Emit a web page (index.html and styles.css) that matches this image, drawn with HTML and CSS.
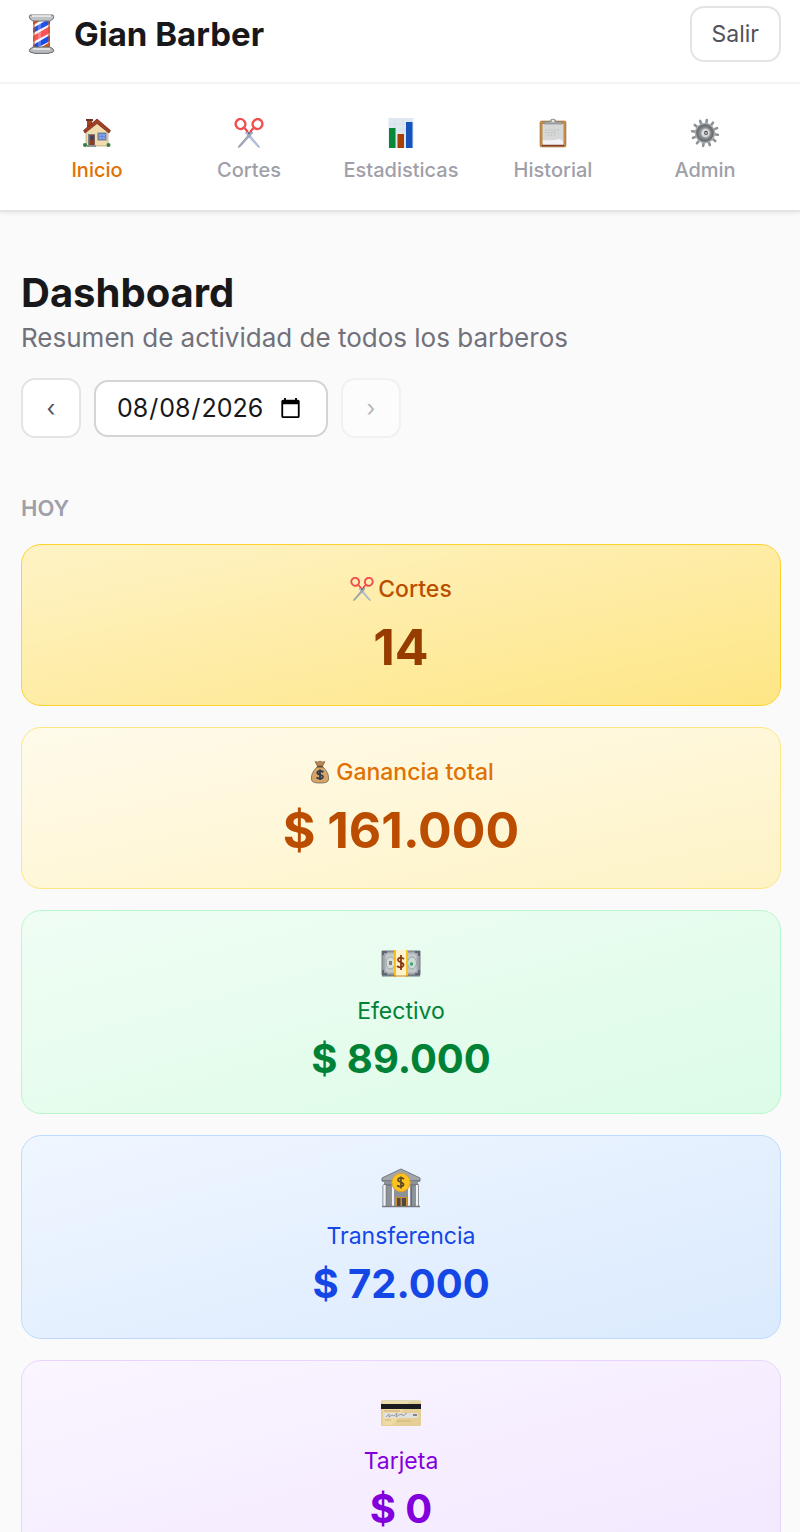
FILE: index.html
```html
<!DOCTYPE html>
<html lang="es">
<head>
	<meta charset="UTF-8">
	<meta name="viewport" content="width=device-width, initial-scale=1">
	<title>Gian Barber</title>
	<link rel="stylesheet" href="styles.css">
</head>
<body>
	<svg class="sprite" aria-hidden="true">
		<symbol id="scissors" viewBox="0 0 30 30">
			<path d="M12.6 13.2 24.6 27.6 25.6 29.4 23.6 28.6 11.4 15z" fill="#b9c6e8" stroke="#8d99b5" stroke-width=".6"/>
			<path d="M17.4 13.2 5.2 27.6 4.2 29.4 6.4 28.4 18.6 15z" fill="#a9b2c4" stroke="#70798c" stroke-width=".6"/>
			<path d="M14 14 10.5 10M16 14l3.5-4" stroke="#f04444" stroke-width="2"/>
			<ellipse cx="6.500" cy="6" rx="4.800" ry="5" fill="none" stroke="#f04d4d" stroke-width="2.4" transform="rotate(-28 6.500 6)"/>
			<ellipse cx="23.500" cy="6" rx="4.800" ry="5" fill="none" stroke="#f04d4d" stroke-width="2.4" transform="rotate(28 23.500 6)"/>
			<circle cx="15" cy="15" r="1.100" fill="#555f70"/>
		</symbol>
	</svg>

	<div class="app">
		<header class="header">
			<div class="topbar">
				<div class="brand">
					<svg class="brand-icon" viewBox="0 0 40 40" aria-hidden="true">
						<clipPath id="pole"><path d="M12 6h17v28H12z"/></clipPath>
						<path d="M12 6h17v28H12z" fill="#f5f7ff"/>
						<g clip-path="url(#pole)">
							<path d="M12 6h9L12 11z" fill="#cf4a1c"/>
							<path d="M12 14 26 6h3v4L12 19z" fill="#2250e8"/>
							<path d="M12 22 29 12v7L12 28z" fill="#fb5358"/>
							<path d="M12 31 29 21v6L16 34h-4z" fill="#1c4be5"/>
							<path d="M19 34 29 28v6z" fill="#d5501e"/>
							<path d="M12 6h2v28h-2zM27 6h2v28h-2z" fill="#cb5420" opacity=".6"/>
							<path d="M17 6h3v28h-3z" fill="#fff" opacity=".25"/>
						</g>
						<path d="M9 1h23q1.500 1.500 0 4l-3 2H12L9 5q-1.500-2 0-4z" fill="#bfc3c5" stroke="#727678"/>
						<path d="M11 2h19" stroke="#f1f2f2" stroke-width="1.500"/>
						<path d="M12 33h17l3 2q1.500 2 0 3l-5 1.400H14L9 38q-1.500-1 0-3z" fill="#b6babc" stroke="#666a6d"/>
						<path d="M12 35h17" stroke="#eee" stroke-width="1.500"/>
					</svg>
					<span class="brand-name">Gian Barber</span>
				</div>
				<button type="button" class="logout">Salir</button>
			</div>
			<nav class="tabs">
				<a href="#inicio" class="tab active">
					<svg class="tab-icon" viewBox="0 0 30 30" aria-hidden="true">
						<path d="M5 2h5v9H5z" fill="#a34522"/><path d="M4 1h7v2H4z" fill="#6f3424"/>
						<path d="M4 13 15 4l11 9v15H4z" fill="#f0dcae" stroke="#a88e60" stroke-width=".6"/>
						<path d="M15 1 1.500 12.500 3 15l12-9.500L27 15l1.500-2.500z" fill="#a63f20" stroke="#632a1c" stroke-width=".7"/>
						<path d="M6 16h7v12H6z" fill="#75848f"/><path d="M7.500 17h5v11h-5z" fill="#8a3d20"/>
						<path d="M8.500 18h3v4h-3z" fill="#364662"/>
						<path d="M15.500 14.500h9v8h-9z" fill="#70829c"/><path d="M17 16h6v5h-6z" fill="#7fa1fb"/>
						<path d="M20 16v5M17 18.500h6" stroke="#5470ba" stroke-width=".5"/>
						<path d="M5 27h9v2H5z" fill="#8c9398"/>
						<circle cx="3" cy="27" r="2" fill="#347a43"/><circle cx="26.500" cy="27" r="2" fill="#347a43"/>
					</svg>
					<span>Inicio</span>
				</a>
				<a href="#cortes" class="tab">
					<svg class="tab-icon" aria-hidden="true"><use href="#scissors"/></svg>
					<span>Cortes</span>
				</a>
				<a href="#estadisticas" class="tab">
					<svg class="tab-icon" viewBox="0 0 30 30" aria-hidden="true">
						<path d="M2.500 0h25v30h-25z" fill="#dfe8f0"/>
						<path d="M2.500 6h25M2.500 12h25M2.500 18h25M2.500 24h25M9 0v30M17 0v30" stroke="#cfdbe8" stroke-width=".6"/>
						<path d="M3 10h6.500v20H3z" fill="#078738"/>
						<path d="M11.500 16h6.500v14h-6.500z" fill="#a83f04"/>
						<path d="M20 4h6.500v26H20z" fill="#1653bd"/>
					</svg>
					<span>Estadisticas</span>
				</a>
				<a href="#historial" class="tab">
					<svg class="tab-icon" viewBox="0 0 30 30" aria-hidden="true">
						<rect x="2" y="3" width="26" height="26" rx="1.500" fill="#c48a48" stroke="#9c7040" stroke-width=".6"/>
						<path d="M4.500 6h21v21h-21z" fill="#d5d8d7"/>
						<path d="M5 22q10 1 16-1l4 2v4H5z" fill="#f3f1f8"/>
						<path d="M7 12h14M7 14.500h12M9 17h9" stroke="#b7bbba" stroke-width=".8" stroke-dasharray="2 1"/>
						<path d="M6 6V4h6q0-3 3-3t3 3h6v2z" fill="#a8adaf" stroke="#7c8285" stroke-width=".6"/>
						<circle cx="15" cy="3" r="1" fill="#fff"/>
						<path d="M4 27.500h22" stroke="#823c20" stroke-width="1.500"/>
					</svg>
					<span>Historial</span>
				</a>
				<a href="#admin" class="tab">
					<svg class="tab-icon" viewBox="0 0 30 30" aria-hidden="true">
						<g stroke="#8c9295" stroke-width="2.600" stroke-linecap="round" transform="rotate(8 15 15)">
							<path d="M15 2v26M2 15h26M8.500 3.700l13 22.600M3.700 8.500l22.600 13M3.700 21.500l22.600-13M8.500 26.300l13-22.600"/>
						</g>
						<circle cx="15" cy="15" r="10.300" fill="#a9aeb0"/>
						<circle cx="15" cy="15" r="7.800" fill="#85898c" stroke="#6c7073" stroke-width="2.200"/>
						<circle cx="15.500" cy="15" r="4.500" fill="#dcdedf" stroke="#aaa"/>
						<ellipse cx="16" cy="15" rx="1.800" ry="2.300" fill="#414548"/>
						<path d="M16 14v2.500" stroke="#e6e6e6" stroke-width="1.200"/>
					</svg>
					<span>Admin</span>
				</a>
			</nav>
		</header>

		<main class="main">
			<h1>Dashboard</h1>
			<p class="subtitle">Resumen de actividad de todos los barberos</p>
			<div class="day-picker">
				<button type="button" class="step" aria-label="Día anterior">‹</button>
				<input type="date" class="date" value="2026-08-08" aria-label="Fecha">
				<button type="button" class="step" aria-label="Día siguiente" disabled>›</button>
			</div>

			<h2>Hoy</h2>
			<section class="cards">
				<article class="card cuts">
					<p class="label"><svg class="label-icon" aria-hidden="true"><use href="#scissors"/></svg>Cortes</p>
					<p class="total">14</p>
				</article>
				<article class="card earnings">
					<p class="label">
						<svg class="label-icon" viewBox="0 0 24 24" aria-hidden="true">
							<path d="M7 1.500 10 2l2-1 2 1 3-.500-2.500 5h-5z" fill="#b98551" stroke="#7d5934" stroke-width=".6"/>
							<path d="M9 7h6c3 3 6 7 5.500 12-.3 3-2 4-8.500 4s-8.200-1-8.500-4C3 14 6 10 9 7z" fill="#d7a463" stroke="#6b665f" stroke-width=".8"/>
							<path d="M9 6.500h6" stroke="#674b35" stroke-width="1.500"/>
							<path d="M15.500 12q-3.500-2-6 0c-2 3 6 2 5.500 5-.800 2.500-4 2-6.500.500M12 9.500V20" fill="none" stroke="#303b4d" stroke-width="1.800"/>
						</svg>
						Ganancia total
					</p>
					<p class="total">$ 161.000</p>
				</article>
				<article class="card cash">
					<svg class="card-icon" viewBox="0 0 40 40" aria-hidden="true">
						<path d="M1 31h38v2.500H1z" fill="#737880"/>
						<path d="M1 8h38v24H1z" fill="#9b9fa7" stroke="#777c85"/>
						<path d="M4 12l3-2h26l3 2v16l-3 2H7l-3-2z" fill="#c3c9cb" stroke="#a9b0b1"/>
						<ellipse cx="9.500" cy="20" rx="4.500" ry="6" fill="#d6dad9" stroke="#9ea6a7"/>
						<path d="M8 18h3v4H8z" fill="#788089"/>
						<ellipse cx="31" cy="20" rx="4.500" ry="6" fill="#cbdcd4" stroke="#9ea6a7"/>
						<circle cx="30.500" cy="21" r="1.700" fill="#3ea477"/>
						<path d="M2 12V9h4M34 9h4v4M2 27v4h4M34 31h4v-4" fill="none" stroke="#626873" stroke-width="2"/>
						<path d="M14 7h12v27H14z" fill="#fff2d0"/>
						<path d="M14 7v27M26 7v27" stroke="#fbc018" stroke-width="2"/>
						<path d="M13 33h14" stroke="#c98921"/>
						<path d="M23 16q-3-2.500-5.500-.500c-3 4 6 3 5 7-1 2.500-4 2.500-6.500.500M20 12v15" fill="none" stroke="#8b370c" stroke-width="1.800"/>
					</svg>
					<p class="label">Efectivo</p>
					<p class="amount">$ 89.000</p>
				</article>
				<article class="card transfer">
					<svg class="card-icon" viewBox="0 0 40 40" aria-hidden="true">
						<path d="M3 14h34v24H3z" fill="#8d9198"/>
						<path d="M20 1 1 10v3h38v-3z" fill="#a3a7ab" stroke="#737980"/>
						<path d="M1 13h38M2 17h36" stroke="#656b73" stroke-width="1.200"/>
						<path d="M10 18h4v20h-4zM27 18h4v20h-4z" fill="#666c76"/>
						<path d="M3.500 17v21M12 17v21M28 17v21M36 17v21" stroke="#747982" stroke-width="4"/>
						<path d="M3.500 17v21M12 17v21M28 17v21M36 17v21" stroke="#f2f2f5" stroke-width="2.400"/>
						<path d="M1 38.500h38" stroke="#747980" stroke-width="1.500"/>
						<path d="M14.500 29h12v9h-12z" fill="#cf8f2d"/>
						<path d="M16 30h3.500v8H16zM21 30h4v8h-4z" fill="#4d4944"/>
						<circle cx="20" cy="14.500" r="9.200" fill="#ffc31f" stroke="#dda02b"/>
						<path d="M23 11q-3-2-5.500-.500c-3 3.500 6 3 5 6.500-1 2-4 2-6.500.500M20 8.500v12" fill="none" stroke="#5b4a27" stroke-width="1.700"/>
					</svg>
					<p class="label">Transferencia</p>
					<p class="amount">$ 72.000</p>
				</article>
				<article class="card credit">
					<svg class="card-icon" viewBox="0 0 40 40" aria-hidden="true">
						<rect y="7" width="40" height="26" rx="1.500" fill="#e5cf94"/>
						<path d="M2 8h27L12 32H2z" fill="#f3dfac" opacity=".7"/>
						<path d="M0 8h40" stroke="#dce1d4"/>
						<path d="M0 11h40v5H0z" fill="#191b20"/>
						<path d="M3 18h16" stroke="#caa56c"/>
						<path d="M3 20h34v5H3z" fill="#e0e0df"/>
						<path d="m5 24 3-3v3l3-2 2 1 3-3-1 4 3-2 3-1 1 2 4-3" fill="none" stroke="#888c92" stroke-width=".8"/>
						<path d="M32 22h4" stroke="#62666b" stroke-width="1.500"/>
						<path d="M4 27h6M16 28h14" stroke="#ceb27a"/>
					</svg>
					<p class="label">Tarjeta</p>
					<p class="amount">$ 0</p>
				</article>
			</section>
		</main>
	</div>
</body>
</html>
```
FILE: styles.css
```css
*{
	box-sizing: border-box;
}
body{
	margin: 0;
	background: #fafafa;
	color: #18181b;
	font-family: Inter, "Liberation Sans", sans-serif;
}
h1, h2, p{
	margin: 0;
}
button, input{
	font-family: inherit;
}
svg{
	display: block;
	flex: none;
}
.sprite{
	position: absolute;
	width: 0;
	height: 0;
}
/* the content scrolls under the window edge */
.app{
	height: 100vh;
	overflow: auto;
	scrollbar-width: none;
}
.header{
	background: #fff;
	border-bottom: 2px solid #e4e4e7;
	box-shadow: 0 2px 4px rgba(0,0,0,.06);
}
.topbar{
	display: flex;
	align-items: center;
	justify-content: space-between;
	padding: 6px 19px 20px 21px;
	border-bottom: 2px solid #f4f4f5;
}
.brand{
	display: flex;
	align-items: center;
	gap: 13px;
}
.brand-icon{
	width: 40px;
	height: 40px;
}
.brand-name{
	font-size: 33px;
	font-weight: 700;
	line-height: 40px;
}
.logout{
	height: 56px;
	padding: 0 20px;
	border: 2px solid #e4e4e7;
	border-radius: 14px;
	background: #fff;
	color: #52525c;
	font-size: 23px;
}
.tabs{
	display: grid;
	grid-template-columns: repeat(5, 1fr);
	padding: 34px 19px 26px 21px;
}
.tab{
	display: flex;
	flex-direction: column;
	align-items: center;
	gap: 8px;
	color: #9f9fa9;
	font-size: 20px;
	font-weight: 500;
	line-height: 28px;
	text-decoration: none;
}
.tab.active{
	color: #e17100;
}
.tab-icon{
	width: 30px;
	height: 30px;
}
.main{
	padding: 56px 19px 40px 21px;
}
h1{
	font-size: 40px;
	font-weight: 700;
	line-height: 50px;
}
.subtitle{
	color: #71717b;
	font-size: 26px;
	line-height: 40px;
}
.day-picker{
	display: flex;
	align-items: center;
	gap: 13px;
	margin-top: 20px;
}
.step{
	width: 60px;
	height: 60px;
	padding: 0;
	border: 2px solid #e4e4e7;
	border-radius: 14px;
	background: #fff;
	color: #52525c;
	font-size: 23px;
}
.step:disabled{
	opacity: .4;
}
.date{
	width: 234px;
	height: 57px;
	padding: 0 22px 0 20px;
	border: 2px solid #d4d4d8;
	border-radius: 14px;
	background: #fff;
	color: #18181b;
	font-size: 25px;
}
.date::-webkit-calendar-picker-indicator{
	width: 23px;
	height: 23px;
	margin-left: 0;
}
h2{
	margin: 54px 0 20px;
	color: #9f9fa9;
	font-size: 22px;
	font-weight: 600;
	line-height: 32px;
	text-transform: uppercase;
}
.cards{
	display: grid;
	gap: 21px;
}
.card{
	display: flex;
	flex-direction: column;
	align-items: center;
	padding: 27px 20px;
	border: 1px solid;
	border-radius: 20px;
}
.label{
	display: flex;
	align-items: center;
	gap: 4px;
	font-size: 23px;
	font-weight: 400;
	line-height: 34px;
}
.label-icon{
	width: 24px;
	height: 24px;
}
.total{
	margin-top: 10px;
	font-size: 50px;
	font-weight: 700;
	line-height: 62px;
}
.card-icon{
	width: 40px;
	height: 40px;
	margin: 5px 0 11px;
}
.amount{
	margin-top: 4px;
	font-size: 40px;
	font-weight: 700;
	line-height: 54px;
}
.cuts{
	border-color: #ffd230;
	background: linear-gradient(to bottom right, #fef3c6, #fee685);
	color: #bb4d00;
}
.cuts .total{
	color: #973c00;
}
.earnings{
	border-color: #fee685;
	background: linear-gradient(to bottom right, #fffbeb, #fef3c6);
	color: #e17100;
}
.earnings .total{
	color: #bb4d00;
}
.cuts .label, .earnings .label{
	font-weight: 500;
}
.cash{
	border-color: #b9f8cf;
	background: linear-gradient(to bottom right, #f0fdf4, #dcfce7);
	color: #008236;
}
.transfer{
	border-color: #bedbff;
	background: linear-gradient(to bottom right, #eff6ff, #dbeafe);
	color: #1447e6;
}
.credit{
	border-color: #e9d4ff;
	background: linear-gradient(to bottom right, #faf5ff, #f3e8ff);
	color: #8200db;
}
```
